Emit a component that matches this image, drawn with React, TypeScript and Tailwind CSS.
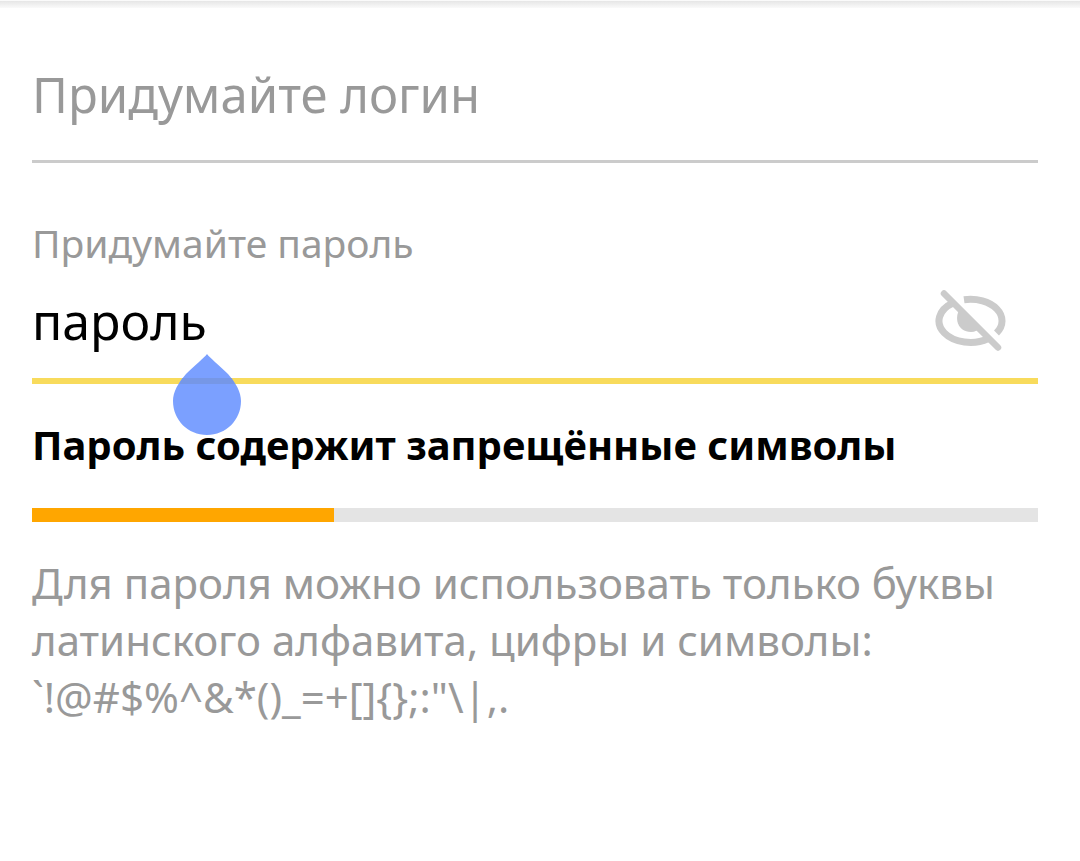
import { useState } from "react";

function HiddenEyeIcon() {
  return (
    <svg viewBox="0 0 72 68" className="h-[68px] w-[72px]" fill="none" aria-hidden="true">
      <path
        d="M19 16 A31.500 21.500 0 0 0 54 51.800"
        stroke="#cbcbcb"
        strokeWidth="7"
      />
      <path
        d="M30 12.800 A31.500 21.500 0 0 1 62.500 46"
        stroke="#cbcbcb"
        strokeWidth="7"
      />
      <path d="M26 22 C20 30 23 45 37 45 C41 45 44 43 46 41 Z" fill="#cbcbcb" />
      <path d="M10 6.500 L64 60.500" stroke="#cbcbcb" strokeWidth="6.500" strokeLinecap="round" />
    </svg>
  );
}

function CaretHandle() {
  return (
    <svg
      viewBox="0 0 68 81"
      className="pointer-events-none absolute left-[141px] top-[67px] h-[81px] w-[68px]"
      aria-hidden="true"
    >
      <path
        d="M34 0 C36 3 47 12 55 20 C63 29 68 38 68 47 C68 66 53 81 34 81 C15 81 0 66 0 47 C0 38 5 29 13 20 C21 12 32 3 34 0 Z"
        fill="#7ba0ff"
      />
      <path d="M9.500 24 H58.500 L62 30 H6 Z" fill="#7697e6" />
    </svg>
  );
}

export default function App() {
  const [login, setLogin] = useState("");
  const [password, setPassword] = useState("пароль");

  return (
    <main className="min-h-screen bg-white font-['Noto_Sans',sans-serif] text-black">
      <div className="h-2 border-t border-[#fafafa] bg-linear-to-b from-[#e6e6e6] to-[#fafafa]" />
      <form className="pl-8 pr-[42px]">
        <input
          type="text"
          aria-label="Придумайте логин"
          placeholder="Придумайте логин"
          value={login}
          onChange={(e) => setLogin(e.target.value)}
          className="block h-[155px] w-full border-b-[3px] border-[#cbcbcb] pb-7 pt-12 text-[49px] outline-none placeholder:text-[#999999] placeholder:opacity-100"
        />
        <label
          htmlFor="password"
          className="block pt-14 text-[39px] leading-[48px] text-[#999999]"
        >
          Придумайте пароль
        </label>
        <div className="relative mt-5 flex h-[97px] items-start border-b-[6px] border-[#f8db5c]">
          <input
            id="password"
            type="text"
            value={password}
            onChange={(e) => setPassword(e.target.value)}
            className="h-[68px] min-w-0 flex-1 text-[50px] outline-none"
          />
          <button type="button" aria-label="Показать или скрыть пароль" className="mr-8">
            <HiddenEyeIcon />
          </button>
          <CaretHandle />
        </div>
        <p className="pt-8 text-[40px] font-bold leading-[57px]">
          Пароль содержит запрещённые символы
        </p>
        <div className="mt-[35px] h-3.5 bg-[#e4e4e4]">
          <div className="h-full w-[30%] bg-[#ffa600]" />
        </div>
        <p className="pt-8 text-[42px] leading-[57px] text-[#999999]">
          Для пароля можно использовать только буквы латинского алфавита, цифры и символы:
          <br />
          {'`!@#$%^&*()_=+[]{};:"\\|,.'}
        </p>
      </form>
    </main>
  );
}
